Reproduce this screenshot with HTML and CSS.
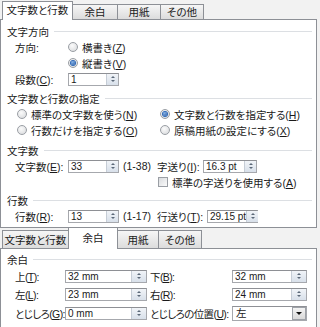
FILE: index.html
```html
<!DOCTYPE html>
<html lang="ja">
<head>
  <meta charset="UTF-8" />
  <meta name="viewport" content="width=device-width, initial-scale=1.0" />
  <title>ページ設定</title>
  <link rel="stylesheet" href="styles.css">
</head>
<body>
  <div class="dlg">
    <div class="tabs tabs-top">
      <div class="tab active tt1">文字数と行数</div>
      <div class="tab tt2">余白</div>
      <div class="tab tt3">用紙</div>
      <div class="tab tt4">その他</div>
    </div>
    <div class="panel panel-top">
      <div class="gtitle">文字方向</div>
      <div class="row">
        <span class="lbl">方向:</span>
        <span class="radio"></span><span>横書き(<u>Z</u>)</span>
      </div>
      <div class="row">
        <span class="lbl"></span>
        <span class="radio on"></span><span>縦書き(<u>V</u>)</span>
      </div>
      <div class="row">
        <span class="lbl">段数(<u>C</u>):</span>
        <span class="spin w51"><span class="val">1</span><span class="btn"></span></span>
      </div>

      <div class="gtitle g2">文字数と行数の指定</div>
      <div class="row opts">
        <span class="half"><span class="radio"></span><span>標準の文字数を使う(<u>N</u>)</span></span>
        <span class="half"><span class="radio on"></span><span>文字数と行数を指定する(<u>H</u>)</span></span>
      </div>
      <div class="row opts">
        <span class="half"><span class="radio"></span><span>行数だけを指定する(<u>O</u>)</span></span>
        <span class="half"><span class="radio"></span><span>原稿用紙の設定にする(<u>X</u>)</span></span>
      </div>

      <div class="gtitle g3">文字数</div>
      <div class="row">
        <span class="lbl">文字数(<u>E</u>):</span>
        <span class="spin w51"><span class="val">33</span><span class="btn"></span></span>
        <span class="range">(1-38)</span>
        <span class="lbl2 w46">字送り(<u>I</u>):</span>
        <span class="spin w54"><span class="val">16.3 pt</span><span class="btn"></span></span>
      </div>
      <div class="row">
        <span class="skip"></span>
        <span class="check"></span><span>標準の字送りを使用する(<u>A</u>)</span>
      </div>

      <div class="gtitle g4">行数</div>
      <div class="row">
        <span class="lbl">行数(<u>R</u>):</span>
        <span class="spin w51"><span class="val">13</span><span class="btn"></span></span>
        <span class="range">(1-17)</span>
        <span class="lbl2 w50">行送り(<u>T</u>):</span>
        <span class="spin w51"><span class="val">29.15 pt</span><span class="btn"></span></span>
      </div>
    </div>
  </div>

  <div class="dlg">
    <div class="tabs tabs-bottom">
      <div class="tab bt1">文字数と行数</div>
      <div class="tab active bt2">余白</div>
      <div class="tab bt3">用紙</div>
      <div class="tab bt4">その他</div>
    </div>
    <div class="panel panel-bottom">
      <div class="gtitle">余白</div>
      <div class="row m-row first">
        <span class="lbl m-lbl">上(<u>T</u>):</span>
        <span class="spin big w82"><span class="val">32 mm</span><span class="btn"></span></span>
        <span class="lbl2 m-lbl2 gap3">下(<u>B</u>):</span>
        <span class="spin big w75"><span class="val">32 mm</span><span class="btn"></span></span>
      </div>
      <div class="row m-row">
        <span class="lbl m-lbl">左(<u>L</u>):</span>
        <span class="spin big w82"><span class="val">23 mm</span><span class="btn"></span></span>
        <span class="lbl2 m-lbl2 gap3">右(<u>R</u>):</span>
        <span class="spin big w75"><span class="val">24 mm</span><span class="btn"></span></span>
      </div>
      <div class="row m-row last">
        <span class="lbl m-lbl">とじしろ(<u>G</u>):</span>
        <span class="spin big w82"><span class="val">0 mm</span><span class="btn"></span></span>
        <span class="lbl2 m-lbl2 gap3">とじしろの位置(<u>U</u>):</span>
        <span class="select w75"><span class="val">左</span><span class="drop"></span></span>
      </div>
    </div>
  </div>
</body>
</html>
```

FILE: styles.css
```css
body {
  margin: 0;
  background: #f2f2f2;
  font-family: "Liberation Sans", "Noto Sans CJK JP", sans-serif;
  font-size: 10.5px;
  color: #1a1a1a;
  font-feature-settings: "palt";
  overflow: hidden;
}
u {
  text-decoration: underline;
  text-underline-offset: 1px;
}
.dlg {
  width: 317px;
}

/* tabs */
.tabs {
  display: flex;
  align-items: flex-end;
}
.tabs-top {
  height: 19px;
}
.tabs-bottom {
  height: 20px;
}
.tab {
  box-sizing: border-box;
  height: 15px;
  border: 1px solid #8d9096;
  border-bottom: none;
  background: linear-gradient(#f6f6f6, #dcdcdc);
  display: flex;
  align-items: center;
  justify-content: center;
  line-height: 12px;
  margin-left: -1px;
}
.tab.active {
  height: 19px;
  background: #fff;
  margin-bottom: -1px;
  position: relative;
  z-index: 1;
  padding-bottom: 2px;
}
.tabs-bottom .tab {
  height: 18px;
}
.tabs-bottom .tab.active {
  height: 22px;
}
.tt1 { width: 71px; margin-left: 2px; }
.tt2 { width: 46px; }
.tt3 { width: 44px; }
.tt4 { width: 44px; }
.bt1 { width: 67px; margin-left: 2px; }
.bt2 { width: 50px; }
.bt3 { width: 42px; }
.bt4 { width: 44px; }

/* panels */
.panel {
  box-sizing: border-box;
  background: #fff;
  border: 1px solid #8d9096;
  padding: 3px 4px 0 6px;
}
.panel-top {
  height: 209px;
}
.panel-bottom {
  height: 90px;
  padding-top: 2px;
  border-bottom: none;
}

.gtitle {
  display: flex;
  align-items: center;
  height: 16px;
}
.gtitle::after {
  content: "";
  flex: 1;
  border-top: 1px solid #dcdfe3;
  margin-left: 5px;
}
.g2 { margin-top: 3px; }
.g3 { margin-top: 5px; height: 15px; }
.g4 { margin-top: 2px; }

.row {
  display: flex;
  align-items: center;
  height: 16px;
  padding-left: 8px;
  white-space: nowrap;
}
.row.opts {
  padding-left: 10px;
}
.lbl {
  width: 53px;
  flex: none;
}
.lbl2 {
  flex: none;
}
.range {
  width: 34px;
  margin-left: 4px;
  flex: none;
}
.w46 { width: 46px; }
.w50 { width: 50px; }
.w51 { width: 51px; }
.w54 { width: 54px; }
.w75 { width: 75px; }
.w82 { width: 82px; }
.gap3 { margin-left: 3px; }
.skip {
  width: 143px;
  flex: none;
}
.half {
  display: flex;
  align-items: center;
  width: 143px;
  flex: none;
}

/* radios and checkbox */
.radio {
  box-sizing: border-box;
  width: 10px;
  height: 10px;
  border-radius: 50%;
  border: 1px solid #9a9ea4;
  background: radial-gradient(circle at 40% 35%, #fbfbfb, #d5d7da);
  margin-right: 4px;
  flex: none;
  display: flex;
  align-items: center;
  justify-content: center;
}
.radio.on::before {
  content: "";
  width: 4px;
  height: 4px;
  border-radius: 50%;
  background: radial-gradient(circle at 40% 35%, #7fb0e8, #1d4f9a);
  box-shadow: 0 0 0 1px #2d68b8;
}
.check {
  box-sizing: border-box;
  width: 10px;
  height: 10px;
  border: 1px solid #9a9ea4;
  background: linear-gradient(135deg, #d9dbde, #fbfbfb);
  margin-right: 4px;
  flex: none;
}

/* spin boxes */
.spin, .select {
  box-sizing: border-box;
  display: flex;
  height: 13px;
  border: 1px solid #a6a8ad;
  border-top-color: #8e9095;
  background: #fff;
  flex: none;
}
.select {
  height: 15px;
}
.val {
  flex: 1;
  padding-left: 2px;
  line-height: 11px;
  font-size: 10px;
  white-space: nowrap;
}
.btn {
  width: 11px;
  flex: none;
  background: linear-gradient(#f1f4f8, #d8e0ea);
  border-left: 1px solid #c6cdd6;
  display: flex;
  flex-direction: column;
  align-items: center;
  justify-content: center;
  gap: 2px;
}
.big .btn {
  width: 14px;
}
.btn::before {
  content: "";
  border-left: 2.5px solid transparent;
  border-right: 2.5px solid transparent;
  border-bottom: 2.5px solid #5b6878;
}
.btn::after {
  content: "";
  border-left: 2.5px solid transparent;
  border-right: 2.5px solid transparent;
  border-top: 2.5px solid #5b6878;
}
.select .val {
  line-height: 13px;
  padding-left: 3px;
  font-size: 10.5px;
}
.drop {
  box-sizing: border-box;
  width: 14px;
  flex: none;
  border: 1px solid #9ea2a8;
  background: linear-gradient(#f4f4f4, #d9d9d9);
  display: flex;
  align-items: center;
  justify-content: center;
}
.drop::before {
  content: "";
  border-left: 3px solid transparent;
  border-right: 3px solid transparent;
  border-top: 3px solid #111;
}

.m-row.first { margin-top: 1px; }
.m-row { margin-top: 2px; }
.m-row.last { margin-top: 3px; }
.m-lbl {
  width: 50px;
  letter-spacing: -0.6px;
}
.m-lbl2 {
  width: 82px;
  letter-spacing: -0.6px;
}
```
